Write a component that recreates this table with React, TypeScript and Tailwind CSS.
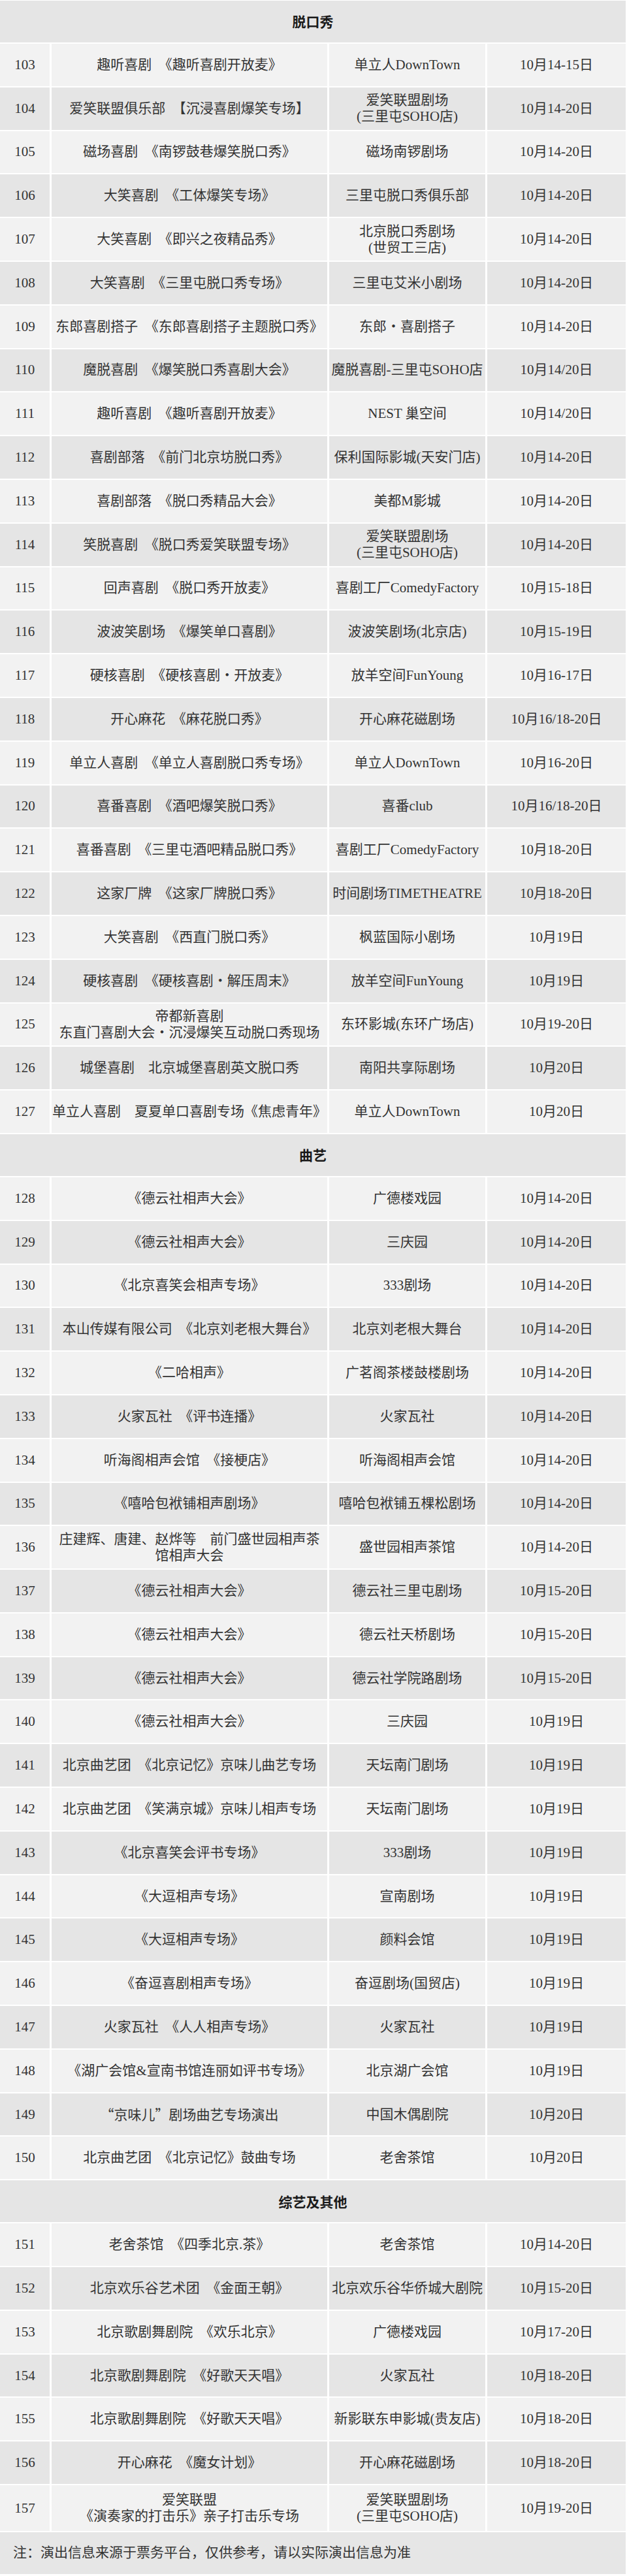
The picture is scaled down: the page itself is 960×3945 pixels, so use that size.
import type { ReactNode } from "react"

type Show = {
  no: number
  title: ReactNode[]
  venue: string[]
  date: string
  tall?: boolean
}

type Section = {
  name: string
  shows: Show[]
}

const S = "\u3000"

const sections: Section[] = [
  {
    name: "脱口秀",
    shows: [
      { no: 103, title: [`趣听喜剧${S}《趣听喜剧开放麦》`], venue: ["单立人DownTown"], date: "10月14-15日" },
      { no: 104, title: [`爱笑联盟俱乐部${S}【沉浸喜剧爆笑专场】`], venue: ["爱笑联盟剧场", "(三里屯SOHO店)"], date: "10月14-20日" },
      { no: 105, title: [`磁场喜剧${S}《南锣鼓巷爆笑脱口秀》`], venue: ["磁场南锣剧场"], date: "10月14-20日" },
      { no: 106, title: [`大笑喜剧${S}《工体爆笑专场》`], venue: ["三里屯脱口秀俱乐部"], date: "10月14-20日" },
      { no: 107, title: [`大笑喜剧${S}《即兴之夜精品秀》`], venue: ["北京脱口秀剧场", "(世贸工三店)"], date: "10月14-20日" },
      { no: 108, title: [`大笑喜剧${S}《三里屯脱口秀专场》`], venue: ["三里屯艾米小剧场"], date: "10月14-20日" },
      { no: 109, title: [`东郎喜剧搭子${S}《东郎喜剧搭子主题脱口秀》`], venue: ["东郎・喜剧搭子"], date: "10月14-20日" },
      { no: 110, title: [`魔脱喜剧${S}《爆笑脱口秀喜剧大会》`], venue: ["魔脱喜剧-三里屯SOHO店"], date: "10月14/20日" },
      { no: 111, title: [`趣听喜剧${S}《趣听喜剧开放麦》`], venue: ["NEST 巢空间"], date: "10月14/20日" },
      { no: 112, title: [`喜剧部落${S}《前门北京坊脱口秀》`], venue: ["保利国际影城(天安门店)"], date: "10月14-20日" },
      { no: 113, title: [`喜剧部落${S}《脱口秀精品大会》`], venue: ["美都M影城"], date: "10月14-20日" },
      { no: 114, title: [`笑脱喜剧${S}《脱口秀爱笑联盟专场》`], venue: ["爱笑联盟剧场", "(三里屯SOHO店)"], date: "10月14-20日" },
      { no: 115, title: [`回声喜剧${S}《脱口秀开放麦》`], venue: ["喜剧工厂ComedyFactory"], date: "10月15-18日" },
      { no: 116, title: [`波波笑剧场${S}《爆笑单口喜剧》`], venue: ["波波笑剧场(北京店)"], date: "10月15-19日" },
      { no: 117, title: [`硬核喜剧${S}《硬核喜剧・开放麦》`], venue: ["放羊空间FunYoung"], date: "10月16-17日" },
      { no: 118, title: [`开心麻花${S}《麻花脱口秀》`], venue: ["开心麻花磁剧场"], date: "10月16/18-20日" },
      { no: 119, title: [`单立人喜剧${S}《单立人喜剧脱口秀专场》`], venue: ["单立人DownTown"], date: "10月16-20日" },
      { no: 120, title: [`喜番喜剧${S}《酒吧爆笑脱口秀》`], venue: ["喜番club"], date: "10月16/18-20日" },
      { no: 121, title: [`喜番喜剧${S}《三里屯酒吧精品脱口秀》`], venue: ["喜剧工厂ComedyFactory"], date: "10月18-20日" },
      { no: 122, title: [`这家厂牌${S}《这家厂牌脱口秀》`], venue: ["时间剧场TIMETHEATRE"], date: "10月18-20日" },
      { no: 123, title: [`大笑喜剧${S}《西直门脱口秀》`], venue: ["枫蓝国际小剧场"], date: "10月19日" },
      { no: 124, title: [`硬核喜剧${S}《硬核喜剧・解压周末》`], venue: ["放羊空间FunYoung"], date: "10月19日" },
      { no: 125, title: ["帝都新喜剧", "东直门喜剧大会・沉浸爆笑互动脱口秀现场"], venue: ["东环影城(东环广场店)"], date: "10月19-20日" },
      { no: 126, title: [`城堡喜剧${S}北京城堡喜剧英文脱口秀`], venue: ["南阳共享际剧场"], date: "10月20日" },
      { no: 127, title: [`单立人喜剧${S}夏夏单口喜剧专场《焦虑青年》`], venue: ["单立人DownTown"], date: "10月20日" },
    ],
  },
  {
    name: "曲艺",
    shows: [
      { no: 128, title: ["《德云社相声大会》"], venue: ["广德楼戏园"], date: "10月14-20日" },
      { no: 129, title: ["《德云社相声大会》"], venue: ["三庆园"], date: "10月14-20日" },
      { no: 130, title: ["《北京喜笑会相声专场》"], venue: ["333剧场"], date: "10月14-20日" },
      { no: 131, title: [`本山传媒有限公司${S}《北京刘老根大舞台》`], venue: ["北京刘老根大舞台"], date: "10月14-20日" },
      { no: 132, title: ["《二哈相声》"], venue: ["广茗阁茶楼鼓楼剧场"], date: "10月14-20日" },
      { no: 133, title: [`火家瓦社${S}《评书连播》`], venue: ["火家瓦社"], date: "10月14-20日" },
      { no: 134, title: [`听海阁相声会馆${S}《接梗店》`], venue: ["听海阁相声会馆"], date: "10月14-20日" },
      { no: 135, title: ["《嘻哈包袱铺相声剧场》"], venue: ["嘻哈包袱铺五棵松剧场"], date: "10月14-20日" },
      { no: 136, title: [`庄建辉、唐建、赵烨等${S}前门盛世园相声茶`, "馆相声大会"], venue: ["盛世园相声茶馆"], date: "10月14-20日" },
      { no: 137, title: ["《德云社相声大会》"], venue: ["德云社三里屯剧场"], date: "10月15-20日" },
      { no: 138, title: ["《德云社相声大会》"], venue: ["德云社天桥剧场"], date: "10月15-20日" },
      { no: 139, title: ["《德云社相声大会》"], venue: ["德云社学院路剧场"], date: "10月15-20日" },
      { no: 140, title: ["《德云社相声大会》"], venue: ["三庆园"], date: "10月19日" },
      { no: 141, title: [`北京曲艺团${S}《北京记忆》京味儿曲艺专场`], venue: ["天坛南门剧场"], date: "10月19日" },
      { no: 142, title: [`北京曲艺团${S}《笑满京城》京味儿相声专场`], venue: ["天坛南门剧场"], date: "10月19日" },
      { no: 143, title: ["《北京喜笑会评书专场》"], venue: ["333剧场"], date: "10月19日" },
      { no: 144, title: ["《大逗相声专场》"], venue: ["宣南剧场"], date: "10月19日" },
      { no: 145, title: ["《大逗相声专场》"], venue: ["颜料会馆"], date: "10月19日" },
      { no: 146, title: ["《奋逗喜剧相声专场》"], venue: ["奋逗剧场(国贸店)"], date: "10月19日" },
      { no: 147, title: [`火家瓦社${S}《人人相声专场》`], venue: ["火家瓦社"], date: "10月19日" },
      { no: 148, title: ["《湖广会馆&宣南书馆连丽如评书专场》"], venue: ["北京湖广会馆"], date: "10月19日" },
      {
        no: 149,
        title: [
          <>
            <span className="font-['Noto_Sans_CJK_SC']">“京味儿”</span>剧场曲艺专场演出
          </>,
        ],
        venue: ["中国木偶剧院"],
        date: "10月20日",
      },
      { no: 150, title: [`北京曲艺团${S}《北京记忆》鼓曲专场`], venue: ["老舍茶馆"], date: "10月20日" },
    ],
  },
  {
    name: "综艺及其他",
    shows: [
      { no: 151, title: [`老舍茶馆${S}《四季北京.茶》`], venue: ["老舍茶馆"], date: "10月14-20日" },
      { no: 152, title: [`北京欢乐谷艺术团${S}《金面王朝》`], venue: ["北京欢乐谷华侨城大剧院"], date: "10月15-20日" },
      { no: 153, title: [`北京歌剧舞剧院${S}《欢乐北京》`], venue: ["广德楼戏园"], date: "10月17-20日" },
      { no: 154, title: [`北京歌剧舞剧院${S}《好歌天天唱》`], venue: ["火家瓦社"], date: "10月18-20日" },
      { no: 155, title: [`北京歌剧舞剧院${S}《好歌天天唱》`], venue: ["新影联东申影城(贵友店)"], date: "10月18-20日" },
      { no: 156, title: [`开心麻花${S}《魔女计划》`], venue: ["开心麻花磁剧场"], date: "10月18-20日" },
      {
        no: 157,
        title: ["爱笑联盟", "《演奏家的打击乐》亲子打击乐专场"],
        venue: ["爱笑联盟剧场", "(三里屯SOHO店)"],
        date: "10月19-20日",
        tall: true,
      },
    ],
  },
]

function Cell({ lines, bg }: { lines: ReactNode[]; bg: string }) {
  return (
    <div className={`${bg} flex flex-col items-center justify-center text-center whitespace-nowrap leading-[25px]`}>
      {lines.map((line, i) => (
        <div key={i}>{line}</div>
      ))}
    </div>
  )
}

function ShowRow({ show, index }: { show: Show; index: number }) {
  const bg = index % 2 === 0 ? "bg-[#f2f2f2]" : "bg-[#e5e5e5]"
  return (
    <div className={`grid grid-cols-[76px_422px_239px_1fr] gap-x-[3px] ${show.tall ? "h-[70px]" : "h-[64.8px]"}`}>
      <Cell lines={[String(show.no)]} bg={bg} />
      <Cell lines={show.title} bg={bg} />
      <Cell lines={show.venue} bg={bg} />
      <Cell lines={[show.date]} bg={bg} />
    </div>
  )
}

export default function App() {
  return (
    <div
      lang="zh-CN"
      className="w-[960px] bg-white pt-px pr-[2px] flex flex-col gap-y-[2px] text-[21px] text-[#333333] font-['Liberation_Serif','Noto_Sans_CJK_SC',serif]"
    >
      {sections.map((section) => (
        <div key={section.name} className="contents">
          {/* section title band */}
          <div className="h-[64px] bg-[#e5e5e5] flex items-center justify-center font-bold text-[#1a1a1a] font-['Noto_Sans_CJK_SC',sans-serif]">
            {section.name}
          </div>
          {section.shows.map((show, i) => (
            <ShowRow key={show.no} show={show} index={i} />
          ))}
        </div>
      ))}
      <div className="h-[64px] bg-[#e6e6e6] flex items-center pl-[20px] whitespace-nowrap">
        注：演出信息来源于票务平台，仅供参考，请以实际演出信息为准
      </div>
    </div>
  )
}
